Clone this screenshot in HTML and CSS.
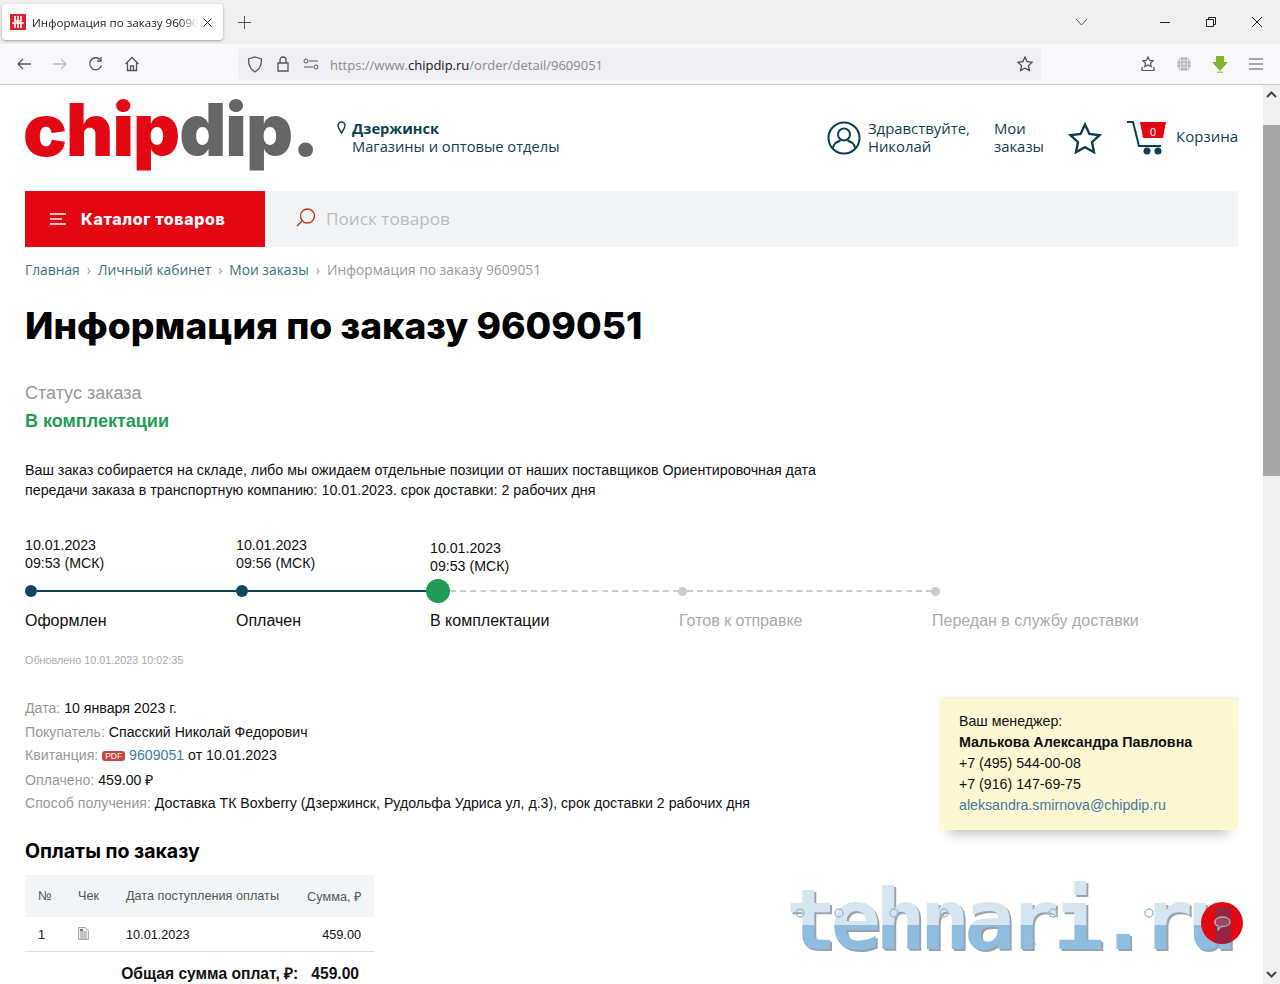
FILE: index.html
```html
<!DOCTYPE html>
<html lang="ru">

<head>
    <meta charset="UTF-8">
    <title>Информация по заказу 9609051</title>
    <link rel="stylesheet" href="styles.css">
</head>

<body>
    <div class="tabbar">
        <div class="tab">
            <svg class="favicon" width="16" height="16" viewBox="0 0 16 16">
                <rect width="16" height="16" fill="#d8232a"/>
                <path d="M5 2v5h6V2M8 2v12M2 9h12M5 9v5M11 9v5" stroke="#fff" stroke-width="1.6" fill="none"/>
            </svg>
            <span class="tab-title">Информация по заказу 9609051</span>
            <svg width="9" height="9" viewBox="0 0 9 9"><path d="M.5.5l8 8M8.500.5l-8 8" stroke="#333" fill="none"/></svg>
        </div>
        <svg class="tab-new" width="13" height="13" viewBox="0 0 13 13"><path d="M6.500 0v13M0 6.500h13" stroke="#555" fill="none"/></svg>
        <svg class="tab-list" width="13" height="8" viewBox="0 0 13 8"><path d="M1 1l5.500 6L12 1" stroke="#555" fill="none"/></svg>
        <div class="window-btns">
            <svg width="10" height="10" viewBox="0 0 10 10"><path d="M0 5.500h10" stroke="#222" fill="none"/></svg>
            <svg width="10" height="10" viewBox="0 0 10 10"><path d="M.5 2.500h7v7h-7zM2.500 2.500v-2h7v7h-2" stroke="#222" fill="none"/></svg>
            <svg width="10" height="10" viewBox="0 0 10 10"><path d="M0 0l10 10M10 0L0 10" stroke="#222" fill="none"/></svg>
        </div>
    </div>

    <div class="toolbar">
        <div class="nav-btns">
            <svg width="16" height="16" viewBox="0 0 16 16"><path d="M15 8H2M7 3L2 8l5 5" stroke="#555" stroke-width="1.3" fill="none"/></svg>
            <svg width="16" height="16" viewBox="0 0 16 16"><path d="M1 8h13M9 3l5 5-5 5" stroke="#bbb" stroke-width="1.3" fill="none"/></svg>
            <svg width="16" height="16" viewBox="0 0 16 16"><path d="M13.500 9.500A6 6 0 1 1 12 3.500M13 1v4H9" stroke="#555" stroke-width="1.3" fill="none"/></svg>
            <svg width="16" height="16" viewBox="0 0 16 16"><path d="M1.500 8L8 1.500 14.500 8M3.500 7v7.500h9V7M6.500 14.500V10h3v4.500" stroke="#555" stroke-width="1.3" fill="none"/></svg>
        </div>
        <div class="urlbar">
            <svg width="16" height="17" viewBox="0 0 16 17"><path d="M8 1l6.500 2c0 6-1.500 10.500-6.500 13C3 13.500 1.500 9 1.500 3z" stroke="#555" stroke-width="1.3" fill="none"/></svg>
            <svg width="14" height="16" viewBox="0 0 14 16"><path d="M4 7V4a3 3 0 0 1 6 0v3M2 7h10v8H2z" stroke="#555" stroke-width="1.3" fill="none"/></svg>
            <svg width="16" height="12" viewBox="0 0 16 12"><path d="M6 3h9M1 9h9" stroke="#555" fill="none"/><circle cx="3" cy="3" r="2" stroke="#555" fill="none"/><circle cx="13" cy="9" r="2" stroke="#555" fill="none"/></svg>
            <span class="url"><span class="url-dim">https://www.</span>chipdip.ru<span class="url-dim">/order/detail/9609051</span></span>
            <svg class="url-star" width="16" height="16" viewBox="0 0 16 16"><path d="M8 1l2.100 4.600 5 .6-3.700 3.400 1 5L8 12.100 3.600 14.600l1-5L.9 6.200l5-.6z" stroke="#444" stroke-width="1.2" fill="none"/></svg>
        </div>
        <div class="tool-btns">
            <svg width="16" height="16" viewBox="0 0 16 16"><path d="M8 1l1.600 3.400 3.400.4-2.500 2.400.7 3.400L8 9l-3.200 1.600.7-3.400L3 4.800l3.400-.4zM2 11v3.500h12V11" stroke="#555" stroke-width="1.2" fill="none"/></svg>
            <svg width="16" height="16" viewBox="0 0 16 16"><circle cx="8" cy="8" r="7" fill="#b5b5b5"/><path d="M1 8h14M2 4.500h12M2 11.500h12M8 1v14M4.500 2v12M11.500 2v12" stroke="#e8e8e8" stroke-width=".8" fill="none"/></svg>
            <svg width="16" height="17" viewBox="0 0 16 17"><path d="M4 0h8v6h4l-8 9-8-9h4z" fill="#7fb52e"/><rect x="5" y="15.500" width="6" height="1.500" fill="#a9cf72"/></svg>
            <svg width="16" height="12" viewBox="0 0 16 12"><path d="M1 1h14M1 6h14M1 11h14" stroke="#555" stroke-width="1.2" fill="none"/></svg>
        </div>
    </div>

    <div class="viewport">
        <div class="page">
            <header class="header">
                <div class="logo"><span class="logo-red">chip</span><span class="logo-gray">dip.</span></div>
                <div class="city">
                    <svg class="city-pin" width="9" height="13" viewBox="0 0 9 13"><path d="M4.500 12C2.500 8.500 1 6.500 1 4.500a3.500 3.500 0 0 1 7 0C8 6.500 6.500 8.500 4.500 12z" stroke="#0f3f52" stroke-width="1.5" fill="none"/></svg>
                    <div>
                        <div class="city-name">Дзержинск</div>
                        <div class="city-link">Магазины и оптовые отделы</div>
                    </div>
                </div>
                <div class="user-menu">
                    <div class="user">
                        <svg width="34" height="34" viewBox="0 0 34 34">
                            <circle cx="17" cy="17" r="15.500" stroke="#0f3f52" stroke-width="2" fill="none"/>
                            <circle cx="17" cy="13.500" r="6" stroke="#0f3f52" stroke-width="2" fill="none"/>
                            <path d="M6 27c1-5 4-6 7.500-7.500M28 27c-1-5-4-6-7.500-7.500" stroke="#0f3f52" stroke-width="2" fill="none"/>
                        </svg>
                        <div class="menu-text">Здравствуйте,<br>Николай</div>
                    </div>
                    <div class="menu-text orders">Мои<br>заказы</div>
                    <svg class="fav" width="34" height="32" viewBox="0 0 34 32"><path d="M17 2.500l4.400 9.500 10.100 1.200-7.500 6.900 2 10.100L17 25.200 8 30.200l2-10.100-7.500-6.900L12.600 12z" stroke="#0f3f52" stroke-width="2.4" fill="none"/></svg>
                    <div class="cart">
                        <svg width="40" height="34" viewBox="0 0 40 34">
                            <path d="M0 1h6l6 24h22" stroke="#0f3f52" stroke-width="2" fill="none"/>
                            <path d="M13 1h26l-3 16H16z" fill="#e30613"/>
                            <circle cx="20" cy="30" r="3.500" fill="#0f3f52"/>
                            <circle cx="31" cy="30" r="3.500" fill="#0f3f52"/>
                        </svg>
                        <span class="cart-count">0</span>
                        <span class="cart-label">Корзина</span>
                    </div>
                </div>
            </header>

            <nav class="nav">
                <div class="catalog">
                    <svg width="16" height="12" viewBox="0 0 16 12"><path d="M0 1h16M0 6h12M0 11h16" stroke="#fff" stroke-width="1.6" fill="none"/></svg>
                    <span>Каталог товаров</span>
                </div>
                <div class="search">
                    <svg width="20" height="20" viewBox="0 0 20 20"><circle cx="11.500" cy="8" r="7" stroke="#c9302c" stroke-width="1.3" fill="none"/><path d="M6 13l-5 5" stroke="#c9302c" stroke-width="1.5" fill="none"/></svg>
                    <span>Поиск товаров</span>
                </div>
            </nav>

            <div class="crumbs">
                <a>Главная</a><i>›</i><a>Личный кабинет</a><i>›</i><a>Мои заказы</a><i>›</i><span>Информация по заказу 9609051</span>
            </div>

            <h1 class="title">Информация по заказу 9609051</h1>

            <div class="status-label">Статус заказа</div>
            <div class="status-value">В комплектации</div>
            <p class="status-note">Ваш заказ собирается на складе, либо мы ожидаем отдельные позиции от наших поставщиков Ориентировочная дата<br>передачи заказа в транспортную компанию: 10.01.2023. срок доставки: 2 рабочих дня</p>

            <div class="timeline">
                <div class="step step-first">
                    <div class="step-date">10.01.2023<br>09:53 (МСК)</div>
                    <div class="step-track"><b class="dot"></b><b class="line"></b></div>
                    <div class="step-name">Оформлен</div>
                </div>
                <div class="step step-second">
                    <div class="step-date">10.01.2023<br>09:56 (МСК)</div>
                    <div class="step-track"><b class="dot"></b><b class="line"></b></div>
                    <div class="step-name">Оплачен</div>
                </div>
                <div class="step step-current">
                    <div class="step-date">10.01.2023<br>09:53 (МСК)</div>
                    <div class="step-track"><b class="dot"></b><b class="line"></b></div>
                    <div class="step-name">В комплектации</div>
                </div>
                <div class="step step-next">
                    <div class="step-date"></div>
                    <div class="step-track"><b class="dot"></b><b class="line"></b></div>
                    <div class="step-name">Готов к отправке</div>
                </div>
                <div class="step step-last">
                    <div class="step-date"></div>
                    <div class="step-track"><b class="dot"></b></div>
                    <div class="step-name">Передан в службу доставки</div>
                </div>
            </div>
            <div class="updated">Обновлено 10.01.2023 10:02:35</div>

            <div class="details">
                <div class="facts">
                    <div class="fact"><span>Дата:</span> 10 января 2023 г.</div>
                    <div class="fact fact-short"><span>Покупатель:</span> Спасский Николай Федорович</div>
                    <div class="fact fact-tall"><span>Квитанция:</span> <em class="pdf">PDF</em> <a>9609051</a> от 10.01.2023</div>
                    <div class="fact fact-short"><span>Оплачено:</span> 459.00 ₽</div>
                    <div class="fact"><span>Способ получения:</span> Доставка ТК Boxberry (Дзержинск, Рудольфа Удриса ул, д.3), срок доставки 2 рабочих дня</div>
                </div>
                <div class="manager">
                    <div>Ваш менеджер:</div>
                    <div><strong>Малькова Александра Павловна</strong></div>
                    <div>+7 (495) 544-00-08</div>
                    <div>+7 (916) 147-69-75</div>
                    <div><a>aleksandra.smirnova@chipdip.ru</a></div>
                </div>
            </div>

            <h2 class="pay-title">Оплаты по заказу</h2>
            <table class="pay-table">
                <thead>
                    <tr><th class="col-n">№</th><th class="col-c">Чек</th><th class="col-d">Дата поступления оплаты</th><th class="col-s">Сумма, ₽</th></tr>
                </thead>
                <tbody>
                    <tr>
                        <td class="col-n">1</td>
                        <td class="col-c"><svg width="11" height="13" viewBox="0 0 11 13"><path d="M.5.500h7l3 3v9H.5z" fill="#eee" stroke="#aaa"/><path d="M2 5h7M2 7h7M2 9h7M2 11h7" stroke="#999" fill="none"/><rect x="2" y="2" width="3" height="2" fill="#b55"/></svg></td>
                        <td class="col-d">10.01.2023</td>
                        <td class="col-s">459.00</td>
                    </tr>
                </tbody>
            </table>
            <div class="pay-total"><span>Общая сумма оплат, ₽:</span><span>459.00</span></div>

            <div class="watermark">tehnari.ru</div>
            <svg class="watermark-marks" width="450" height="70" viewBox="0 0 450 70" fill="none" stroke="#9dbfd2" stroke-width="1.5">
                <circle cx="10" cy="29" r="4"/>
                <circle cx="49" cy="29" r="4"/>
                <circle cx="104" cy="29" r="4"/>
                <circle cx="154" cy="29" r="4"/>
                <circle cx="263" cy="29" r="4"/>
                <circle cx="359" cy="29" r="4"/>
                <circle cx="241" cy="60" r="4"/>
            </svg>
            <div class="chat">
                <svg width="17" height="15" viewBox="0 0 17 15"><path d="M8.500 1c4 0 7.500 1.700 7.500 4.700S12.500 10.500 8.500 10.500H7L4 14l.2-4C2 9.400 1 7.800 1 5.700 1 2.700 4.500 1 8.500 1z" fill="rgba(255,255,255,.25)" stroke="#fff" stroke-width="1.3"/></svg>
            </div>
        </div>

        <div class="scrollbar">
            <svg width="11" height="7" viewBox="0 0 11 7"><path d="M1 6l4.500-4.500L10 6" stroke="#444" stroke-width="2" fill="none"/></svg>
            <div class="scroll-thumb"></div>
            <svg width="11" height="7" viewBox="0 0 11 7"><path d="M1 1l4.500 4.500L10 1" stroke="#444" stroke-width="2" fill="none"/></svg>
        </div>
    </div>
</body>

</html>
```
FILE: styles.css
```css
* {
    box-sizing: border-box;
}

html,
body {
    margin: 0;
    height: 984px;
    overflow: hidden;
}

body {
    background-color: #fff;
    color: #111;
    font-family: "Liberation Sans", Arial, sans-serif;
    font-size: 14px;
}

a {
    color: #3f7ba3;
}

/* browser chrome */

.tabbar {
    align-items: center;
    background-color: #f0f0f0;
    display: flex;
    height: 44px;
    padding: 4px 18px 4px 2px;
}

.tab {
    align-items: center;
    background-color: #fff;
    border-radius: 4px;
    box-shadow: 0 1px 3px rgba(0, 0, 0, 0.35);
    display: flex;
    height: 36px;
    padding: 0 11px 0 8px;
    width: 221px;
}

.favicon {
    flex: none;
    margin-right: 6px;
}

.tab-title {
    color: #222;
    flex: 1;
    font-family: "Open Sans", sans-serif;
    font-size: 11.6px;
    margin-right: 4px;
    -webkit-mask-image: linear-gradient(to right, #000 88%, transparent);
    mask-image: linear-gradient(to right, #000 88%, transparent);
    overflow: hidden;
    white-space: nowrap;
}

.tab-new {
    margin-left: 15px;
}

.tab-list {
    margin-left: auto;
}

.window-btns {
    display: flex;
    gap: 36px;
    margin-left: 72px;
}

.toolbar {
    align-items: center;
    background-color: #f9f9fb;
    border-bottom: 1px solid #ccc;
    display: flex;
    height: 41px;
    padding: 0 16px;
}

.nav-btns {
    display: flex;
    gap: 20px;
    width: 222px;
}

.urlbar {
    align-items: center;
    background-color: #f0f0f4;
    border-radius: 4px;
    display: flex;
    gap: 13px;
    height: 32px;
    padding: 0 8px 0 9px;
    width: 803px;
}

.url {
    color: #15141a;
    font-family: "Open Sans", sans-serif;
    font-size: 13px;
    margin-left: -2px;
    padding-top: 2px;
}

.url-dim {
    color: #8a8a8a;
}

.url-star {
    margin-left: auto;
}

.tool-btns {
    align-items: center;
    display: flex;
    gap: 20px;
    margin-left: 99px;
}

/* page */

.viewport {
    display: flex;
    height: 899px;
}

.page {
    flex: 1;
    height: 899px;
    overflow: hidden;
    padding: 0 25px;
    position: relative;
}

.scrollbar {
    align-items: center;
    background-color: #f0f0f0;
    display: flex;
    flex-direction: column;
    height: 899px;
    padding: 6px 0;
    width: 17px;
}

.scroll-thumb {
    background-color: #a6a6a6;
    height: 351px;
    margin-bottom: auto;
    margin-top: 27px;
    width: 17px;
}

.header {
    align-items: center;
    color: #0f3f52;
    display: flex;
    height: 106px;
}

.logo {
    font-family: Inter, sans-serif;
    font-size: 73px;
    font-weight: 900;
    letter-spacing: -1px;
    line-height: 1;
    margin-left: -2px;
    margin-top: -17px;
    width: 314px;
}

.logo-red {
    color: #e30613;
}

.logo-gray {
    color: #666;
}

.city {
    display: flex;
    font-family: "Open Sans", sans-serif;
    font-size: 14.7px;
    gap: 6px;
    line-height: 18px;
    margin-top: -2px;
}

.city-pin {
    margin-top: 2px;
}

.city-name {
    font-weight: 700;
}

.user-menu {
    align-items: center;
    display: flex;
    margin-left: auto;
}

.user {
    align-items: center;
    display: flex;
    gap: 7px;
}

.menu-text {
    font-family: "Open Sans", sans-serif;
    font-size: 14.9px;
    line-height: 18px;
    margin-top: -2px;
}

.orders {
    margin-left: 24px;
}

.fav {
    margin-left: 24px;
}

.cart {
    align-items: center;
    display: flex;
    margin-left: 25px;
    position: relative;
}

.cart-count {
    color: #fff;
    font-size: 11px;
    left: 23px;
    position: absolute;
    top: 5px;
}

.cart-label {
    font-family: "Open Sans", sans-serif;
    font-size: 15px;
    margin-left: 9px;
    margin-top: -4px;
}

.nav {
    display: flex;
    height: 56px;
}

.catalog {
    align-items: center;
    background-color: #e30613;
    color: #fff;
    display: flex;
    font-family: Inter, sans-serif;
    font-size: 16px;
    font-weight: 800;
    gap: 15px;
    letter-spacing: 0.6px;
    padding-left: 25px;
    width: 240px;
}

.search {
    align-items: center;
    background-color: #f3f4f5;
    color: #bbb;
    display: flex;
    flex: 1;
    font-family: "Open Sans", sans-serif;
    font-size: 17.2px;
    gap: 10px;
    padding-bottom: 2px;
    padding-left: 31px;
}

.crumbs {
    color: #999;
    font-family: "Open Sans", sans-serif;
    font-size: 13.8px;
    margin-top: 13px;
}

.crumbs a {
    color: #3f6f7f;
}

.crumbs i {
    font-style: normal;
    padding: 0 7px;
}

.title {
    color: #000;
    font-family: Inter, sans-serif;
    font-size: 37.2px;
    font-weight: 800;
    line-height: 46px;
    margin: 24px 0 0;
}

.status-label {
    color: #999;
    font-size: 18px;
    margin-top: 34px;
}

.status-value {
    color: #1f9d55;
    font-size: 18px;
    font-weight: 700;
    margin-top: 7px;
}

.status-note {
    font-size: 14.27px;
    line-height: 20px;
    margin: 28px 0 0;
}

.timeline {
    display: flex;
    margin-top: 36px;
}

.step {
    flex: none;
}

.step-first {
    width: 211px;
}

.step-second {
    width: 194px;
}

.step-current {
    width: 249px;
}

.step-next {
    width: 253px;
}

.step-date {
    font-size: 14.2px;
    height: 43px;
    line-height: 18px;
}

.step-current .step-date {
    padding-top: 3px;
}

.step-track {
    align-items: center;
    display: flex;
    height: 24px;
}

.dot {
    background-color: #0d4460;
    border-radius: 50%;
    flex: none;
    height: 12px;
    width: 12px;
}

.line {
    border-top: 2px solid #0f3f52;
    flex: 1;
}

.step-current .dot {
    background-color: #1f9d55;
    height: 24px;
    margin-left: -4px;
    width: 24px;
}

.step-current .line,
.step-next .line {
    border-top: 2px dashed #ccc;
}

.step-next .dot,
.step-last .dot {
    background-color: #ccc;
    height: 9px;
    margin-left: -1px;
    width: 9px;
}

.step-next .step-name,
.step-last .step-name {
    color: #aaa;
}

.step-name {
    font-size: 16px;
    margin-top: 9px;
}

.updated {
    color: #aaa;
    font-size: 10.8px;
    margin-top: 24px;
}

.details {
    display: flex;
    justify-content: space-between;
    margin-top: 31px;
}

.facts {
    padding-top: 1px;
}

.fact {
    font-size: 14.15px;
    height: 24px;
    line-height: 20px;
}

.fact-short {
    height: 23px;
}

.fact-tall {
    height: 25px;
}

.fact span {
    color: #999;
}

.pdf {
    background-color: #c9453f;
    border-radius: 3px;
    color: #fff;
    font-size: 8.5px;
    font-style: normal;
    padding: 0 3px;
    vertical-align: 1px;
}

.manager {
    background-color: #fdf7d2;
    box-shadow: 0 14px 12px -10px rgba(0, 0, 0, 0.25);
    font-size: 14.2px;
    line-height: 21px;
    padding: 14px 20px;
    width: 299px;
}

.manager strong {
    font-size: 14.35px;
}

.pay-title {
    color: #000;
    font-family: Inter, sans-serif;
    font-size: 19.5px;
    font-weight: 700;
    line-height: 24px;
    margin: 9px 0 0;
}

.pay-table {
    border-collapse: collapse;
    font-size: 12.7px;
    margin-top: 12px;
    table-layout: fixed;
    width: 349px;
}

.pay-table th {
    background-color: #f4f5f6;
    color: #555;
    font-weight: 400;
    height: 42px;
    padding: 0;
    text-align: left;
    white-space: nowrap;
}

.pay-table td {
    border-bottom: 1px solid #ddd;
    height: 34px;
    padding: 2px 0 0;
}

.pay-table .col-n {
    padding-left: 13px;
    width: 53px;
}

.col-c {
    width: 48px;
}

.pay-table .col-s {
    padding-right: 13px;
    text-align: right;
    width: 96px;
}

.pay-total {
    align-items: baseline;
    display: flex;
    font-size: 15.6px;
    font-weight: 700;
    gap: 13px;
    justify-content: flex-end;
    margin-top: 10px;
    padding-right: 15px;
    width: 349px;
}

/* watermark and chat button lie over the page */

.watermark {
    background-image: linear-gradient(#d6e6f0 47px, #8fbde0 47px);
    -webkit-background-clip: text;
    background-clip: text;
    color: transparent;
    filter: drop-shadow(2px 2px 0 #9aa3ad);
    font-family: "DejaVu Sans Mono", monospace;
    font-size: 84px;
    font-weight: 700;
    left: 786px;
    letter-spacing: -6px;
    line-height: 84px;
    position: absolute;
    top: 793px;
}

.watermark-marks {
    left: 790px;
    position: absolute;
    top: 799px;
}

.chat {
    align-items: center;
    background-color: #e30613;
    border-radius: 50%;
    display: flex;
    height: 42px;
    justify-content: center;
    left: 1201px;
    overflow: hidden;
    position: absolute;
    top: 817px;
    width: 42px;
}

.chat::after {
    background-color: rgba(60, 70, 120, 0.45);
    content: "";
    height: 36px;
    left: 14px;
    position: absolute;
    top: 5px;
    width: 16px;
}
```
